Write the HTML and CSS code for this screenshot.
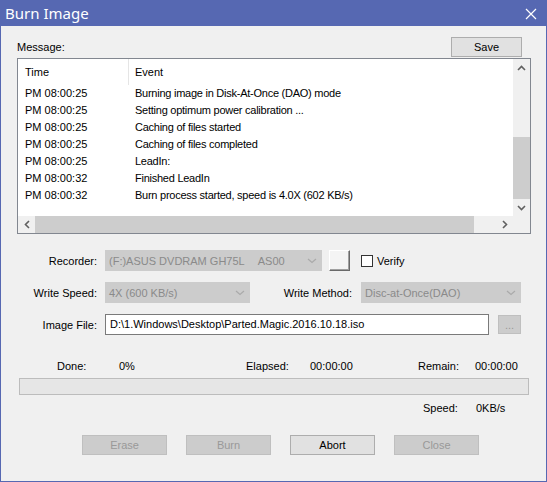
FILE: index.html
```html
<!DOCTYPE html>
<html lang="en">
<head>
    <meta charset="UTF-8">
    <title>Burn Image</title>
    <link rel="stylesheet" href="styles.css">
</head>
<body>
    <div class="window">
        <div class="titlebar">
            <span class="title">Burn Image</span>
            <svg class="close" width="12" height="12" viewBox="0 0 12 12">
                <path d="M1 1 L11 11 M11 1 L1 11" stroke="#fff" stroke-width="1.2" fill="none"/>
            </svg>
        </div>

        <div class="content">
            <div class="msg-head">
                <span>Message:</span>
                <button class="btn save">Save</button>
            </div>

            <div class="listbox">
                <div class="list-view">
                    <div class="list-header">
                        <span class="cell">Time</span>
                        <span class="cell event-head">Event</span>
                    </div>
                    <div class="list-row"><span class="cell">PM 08:00:25</span><span class="cell ev">Burning image in Disk-At-Once (DAO) mode</span></div>
                    <div class="list-row"><span class="cell">PM 08:00:25</span><span class="cell ev">Setting optimum power calibration ...</span></div>
                    <div class="list-row"><span class="cell">PM 08:00:25</span><span class="cell ev">Caching of files started</span></div>
                    <div class="list-row"><span class="cell">PM 08:00:25</span><span class="cell ev">Caching of files completed</span></div>
                    <div class="list-row"><span class="cell">PM 08:00:25</span><span class="cell ev">LeadIn:</span></div>
                    <div class="list-row"><span class="cell">PM 08:00:32</span><span class="cell ev">Finished LeadIn</span></div>
                    <div class="list-row"><span class="cell">PM 08:00:32</span><span class="cell ev">Burn process started, speed is 4.0X (602 KB/s)</span></div>
                </div>
                <div class="vscroll">
                    <div class="arrow">
                        <svg width="9" height="6" viewBox="0 0 9 6"><path d="M1 5 L4.5 1.5 L8 5" stroke="#606060" stroke-width="1.6" fill="none"/></svg>
                    </div>
                    <div class="vtrack"><div class="vthumb"></div></div>
                    <div class="arrow">
                        <svg width="9" height="6" viewBox="0 0 9 6"><path d="M1 1 L4.5 4.5 L8 1" stroke="#606060" stroke-width="1.6" fill="none"/></svg>
                    </div>
                </div>
                <div class="hscroll">
                    <div class="arrow">
                        <svg width="6" height="9" viewBox="0 0 6 9"><path d="M5 1 L1.5 4.5 L5 8" stroke="#606060" stroke-width="1.6" fill="none"/></svg>
                    </div>
                    <div class="htrack"><div class="hthumb"></div></div>
                    <div class="arrow">
                        <svg width="6" height="9" viewBox="0 0 6 9"><path d="M1 1 L4.5 4.5 L1 8" stroke="#606060" stroke-width="1.6" fill="none"/></svg>
                    </div>
                </div>
                <div class="corner"></div>
            </div>

            <div class="form">
                <div class="form-row">
                    <span class="label">Recorder:</span>
                    <div class="combo recorder">
                        <span>(F:)ASUS DVDRAM GH75L</span><span class="rev">AS00</span>
                        <svg class="drop" width="10" height="6" viewBox="0 0 10 6"><path d="M1 1 L5 4.5 L9 1" stroke="#aaa" stroke-width="1.2" fill="none"/></svg>
                    </div>
                    <div class="old-btn"></div>
                    <span class="check"></span>
                    <span class="check-label">Verify</span>
                </div>
                <div class="form-row">
                    <span class="label">Write Speed:</span>
                    <div class="combo speed">
                        <span>4X (600 KB/s)</span>
                        <svg class="drop" width="10" height="6" viewBox="0 0 10 6"><path d="M1 1 L5 4.5 L9 1" stroke="#aaa" stroke-width="1.2" fill="none"/></svg>
                    </div>
                    <span class="label method-label">Write Method:</span>
                    <div class="combo method">
                        <span>Disc-at-Once(DAO)</span>
                        <svg class="drop" width="10" height="6" viewBox="0 0 10 6"><path d="M1 1 L5 4.5 L9 1" stroke="#aaa" stroke-width="1.2" fill="none"/></svg>
                    </div>
                </div>
                <div class="form-row">
                    <span class="label">Image File:</span>
                    <div class="textbox">D:\1.Windows\Desktop\Parted.Magic.2016.10.18.iso</div>
                    <button class="btn browse" disabled>...</button>
                </div>
            </div>

            <div class="stats">
                <span class="s-done">Done:</span>
                <span class="s-pct">0%</span>
                <span class="s-elapsed">Elapsed:</span>
                <span class="s-etime">00:00:00</span>
                <span class="s-remain">Remain:</span>
                <span>00:00:00</span>
            </div>
            <div class="progress"></div>
            <div class="speed-row">
                <span class="s-speed">Speed:</span>
                <span>0KB/s</span>
            </div>

            <div class="actions">
                <button class="btn action" disabled>Erase</button>
                <button class="btn action" disabled>Burn</button>
                <button class="btn action">Abort</button>
                <button class="btn action" disabled>Close</button>
            </div>
        </div>
    </div>
</body>
</html>
```

FILE: styles.css
```css
body {
    margin: 0;
    background-color: #f0f0f0;
    font-family: "Liberation Sans", Arial, sans-serif;
    font-size: 11px;
    color: #000;
}

.window {
    width: 547px;
    height: 482px;
    box-sizing: border-box;
    border: 1px solid #5668b2;
    border-top: none;
    background-color: #f0f0f0;
}

.titlebar {
    height: 26px;
    margin: 0 -1px;
    background-color: #5668b2;
    display: flex;
    align-items: center;
    justify-content: space-between;
    padding: 0 10px 0 5px;
}
.title {
    font-family: "Noto Sans", sans-serif;
    font-size: 15px;
    color: #fff;
    margin-top: -1px;
}
.close {
    margin-top: 1px;
}

.content {
    padding: 0 15px 0 16px;
}

.msg-head {
    margin-top: 11px;
    height: 20px;
    display: flex;
    align-items: center;
    justify-content: space-between;
}

.btn {
    font-family: "Liberation Sans", Arial, sans-serif;
    font-size: 11px;
    color: #000;
    background-color: #e1e1e1;
    border: 1px solid #adadad;
    padding: 0;
    height: 20px;
    box-sizing: border-box;
}
.btn:disabled {
    background-color: #cccccc;
    border-color: #bfbfbf;
    color: #999;
}
.save {
    width: 71px;
    margin-right: 9px;
}

/* message list */
.listbox {
    margin-top: 1px;
    height: 176px;
    box-sizing: border-box;
    border: 1px solid #828790;
    background-color: #fff;
    display: grid;
    grid-template-columns: 1fr 17px;
    grid-template-rows: 1fr 17px;
}
.list-view {
    overflow: hidden;
}
.list-header,
.list-row {
    display: grid;
    grid-template-columns: 110px 1fr;
    white-space: nowrap;
}
.list-header {
    height: 26px;
    line-height: 26px;
}
.list-row {
    height: 17px;
    line-height: 17px;
}
.cell {
    padding-left: 7px;
}
.ev {
    letter-spacing: -0.25px;
}
.event-head {
    border-left: 1px solid #e5e5e5;
    padding-left: 6px;
}

.vscroll {
    background-color: #f0f0f0;
    display: flex;
    flex-direction: column;
}
.vscroll .arrow {
    height: 17px;
    display: flex;
    align-items: center;
    justify-content: center;
}
.vtrack {
    flex: 1;
    padding-top: 61px;
}
.vthumb {
    height: 62px;
    background-color: #cdcdcd;
}

.hscroll {
    background-color: #f0f0f0;
    display: flex;
}
.hscroll .arrow {
    width: 17px;
    display: flex;
    align-items: center;
    justify-content: center;
}
.htrack {
    flex: 1;
}
.hthumb {
    width: 439px;
    height: 100%;
    background-color: #cdcdcd;
}
.corner {
    background-color: #f0f0f0;
}

/* recorder settings */
.form {
    margin-top: 16px;
    display: flex;
    flex-direction: column;
    gap: 11px;
}
.form-row {
    height: 21px;
    display: flex;
    align-items: center;
}
.label {
    width: 80px;
    text-align: right;
    margin-right: 8px;
}
.combo {
    height: 21px;
    box-sizing: border-box;
    background-color: #cccccc;
    color: #8a8a8a;
    display: flex;
    align-items: center;
    padding-left: 4px;
    white-space: nowrap;
}
.combo .drop {
    margin-left: auto;
    margin-right: 5px;
}
.recorder {
    width: 217px;
}
.recorder .rev {
    margin-left: 13px;
}
.speed {
    width: 145px;
}
.method-label {
    width: 102px;
    margin-right: 9px;
}
.method {
    width: 160px;
}
.old-btn {
    width: 21px;
    height: 21px;
    box-sizing: border-box;
    margin-left: 7px;
    background-color: #f4f4f4;
    border: 1px solid;
    border-color: #fff #696969 #696969 #fff;
    box-shadow: inset -1px -1px 0 #a0a0a0;
}
.check {
    width: 12px;
    height: 12px;
    box-sizing: border-box;
    margin-left: 11px;
    border: 1px solid #333;
    background-color: #fff;
}
.check-label {
    margin-left: 4px;
}
.textbox {
    width: 384px;
    height: 21px;
    box-sizing: border-box;
    border: 1px solid #7a7a7a;
    background-color: #fff;
    line-height: 19px;
    padding-left: 4px;
    white-space: nowrap;
}
.browse {
    width: 23px;
    height: 19px;
    margin-left: 9px;
}

/* progress */
.stats {
    margin-top: 24px;
    height: 14px;
    line-height: 14px;
    display: flex;
    padding-left: 40px;
}
.s-done { width: 62px; }
.s-pct { width: 127px; }
.s-elapsed { width: 64px; }
.s-etime { width: 108px; }
.s-remain { width: 57px; }

.progress {
    margin: 5px 2px 0 2px;
    height: 17px;
    box-sizing: border-box;
    border: 1px solid #bcbcbc;
    background-color: #e6e6e6;
}

.speed-row {
    margin-top: 6px;
    height: 14px;
    line-height: 14px;
    display: flex;
    padding-left: 406px;
}
.s-speed {
    width: 53px;
}

.actions {
    margin-top: 20px;
    display: flex;
    gap: 19px;
    padding-left: 65px;
}
.action {
    width: 85px;
}
```
